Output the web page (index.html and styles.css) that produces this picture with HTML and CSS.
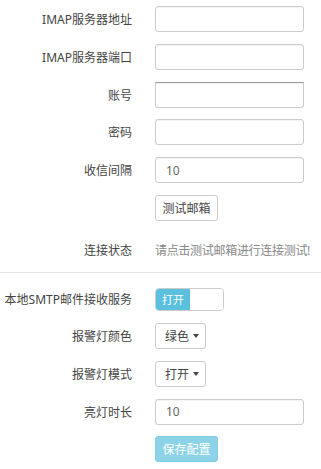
FILE: index.html
```html
<!DOCTYPE html>
<html lang="zh-CN">
<head>
    <meta charset="UTF-8">
    <meta name="viewport" content="width=device-width, initial-scale=1.0">
    <title>邮件配置</title>
    <link rel="stylesheet" href="styles.css">
</head>
<body>
    <form class="config-form">
        <div class="form-row">
            <label class="row-label">IMAP服务器地址</label>
            <input type="text" class="text-input">
        </div>
        <div class="form-row">
            <label class="row-label">IMAP服务器端口</label>
            <input type="text" class="text-input">
        </div>
        <div class="form-row">
            <label class="row-label">账号</label>
            <input type="text" class="text-input scrolled">
        </div>
        <div class="form-row">
            <label class="row-label">密码</label>
            <input type="password" class="text-input">
        </div>
        <div class="form-row">
            <label class="row-label">收信间隔</label>
            <input type="text" class="text-input" value="10">
        </div>
        <div class="form-row">
            <span class="row-label"></span>
            <button type="button" class="btn">测试邮箱</button>
        </div>
        <div class="form-row status-row">
            <label class="row-label">连接状态</label>
            <span class="status-text">请点击测试邮箱进行连接测试!</span>
        </div>

        <hr class="divider">

        <div class="form-row toggle-row">
            <label class="row-label">本地SMTP邮件接收服务</label>
            <div class="toggle">
                <span class="toggle-on">打开</span>
                <span class="toggle-off"></span>
            </div>
        </div>
        <div class="form-row">
            <label class="row-label">报警灯颜色</label>
            <button type="button" class="btn dropdown">绿色<span class="caret"></span></button>
        </div>
        <div class="form-row">
            <label class="row-label">报警灯模式</label>
            <button type="button" class="btn dropdown">打开<span class="caret"></span></button>
        </div>
        <div class="form-row">
            <label class="row-label">亮灯时长</label>
            <input type="text" class="text-input" value="10">
        </div>
        <div class="form-row">
            <span class="row-label"></span>
            <button type="button" class="btn btn-save" disabled>保存配置</button>
        </div>
    </form>
</body>
</html>
```

FILE: styles.css
```css
/* General Styles */
body {
    margin: 0;
    padding: 0;
    background: #ffffff;
    font-family: "Noto Sans", "Noto Sans CJK SC", sans-serif;
    font-size: 12px;
    color: #444444;
}

.config-form {
    padding-top: 6px;
}

/* Rows */
.form-row {
    display: flex;
    align-items: center;
    gap: 23px;
    height: 26px;
    margin-bottom: 11.8px;
}

.row-label {
    width: 132px;
    flex-shrink: 0;
    text-align: right;
    color: #444444;
    white-space: nowrap;
}

/* Inputs */
.text-input {
    box-sizing: border-box;
    width: 149px;
    height: 26px;
    padding: 0 10px;
    border: 1px solid #cccccc;
    border-radius: 3px;
    font-family: inherit;
    font-size: 12px;
    color: #666666;
    outline: none;
    box-shadow: inset 0 1px 1px rgba(0, 0, 0, 0.05);
}

.text-input.scrolled {
    border-top-color: #999999;
    border-top-left-radius: 0;
    border-top-right-radius: 0;
}

/* Buttons */
.btn {
    box-sizing: border-box;
    width: 63px;
    height: 26px;
    padding: 0;
    background: #ffffff;
    border: 1px solid #cccccc;
    border-radius: 3px;
    font-family: inherit;
    font-size: 12px;
    color: #444444;
    white-space: nowrap;
    cursor: pointer;
}

.dropdown {
    display: flex;
    align-items: center;
    width: 51px;
    padding: 0 0 0 9px;
}

.caret {
    display: inline-block;
    width: 0;
    height: 0;
    margin-left: 4px;
    border-top: 4px solid #444444;
    border-left: 3px solid transparent;
    border-right: 3px solid transparent;
}

.btn-save {
    background: #8dd3e8;
    border-color: #80cde4;
    color: #ffffff;
    cursor: not-allowed;
}

/* Status */
.status-row {
    height: 30px;
    margin-top: 14px;
    margin-bottom: 0;
}

.status-text {
    color: #888888;
    letter-spacing: -0.3px;
}

.divider {
    border: none;
    border-top: 1px solid #e5e5e5;
    margin: 7px 0 15px 0;
}

/* Toggle Switch */
.toggle-row {
    height: 23px;
    margin-bottom: 12px;
}

.toggle {
    box-sizing: border-box;
    display: flex;
    width: 69px;
    height: 23px;
    border: 1px solid #cccccc;
    border-radius: 4px;
    overflow: hidden;
}

.toggle-on {
    width: 34px;
    background: #5bc0de;
    color: #ffffff;
    font-size: 11px;
    line-height: 21px;
    text-align: center;
}

.toggle-off {
    flex: 1;
    background: #ffffff;
}
```
